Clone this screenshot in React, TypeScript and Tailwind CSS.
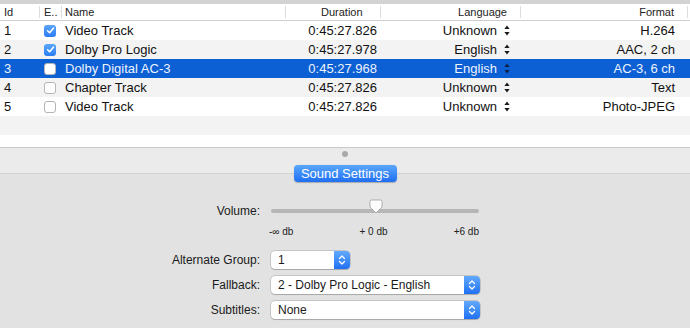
import React from 'react'

const rows = [
  { id: 1, on: true, name: 'Video Track', dur: '0:45:27.826', lang: 'Unknown', fmt: 'H.264' },
  { id: 2, on: true, name: 'Dolby Pro Logic', dur: '0:45:27.978', lang: 'English', fmt: 'AAC, 2 ch' },
  { id: 3, on: false, name: 'Dolby Digital AC-3', dur: '0:45:27.968', lang: 'English', fmt: 'AC-3, 6 ch' },
  { id: 4, on: false, name: 'Chapter Track', dur: '0:45:27.826', lang: 'Unknown', fmt: 'Text' },
  { id: 5, on: false, name: 'Video Track', dur: '0:45:27.826', lang: 'Unknown', fmt: 'Photo-JPEG' },
]

function Checkbox({ on }: { on: boolean }) {
  if (on) {
    return (
      <div className="w-[12px] h-[12px] rounded-[3px] bg-gradient-to-b from-[#5aa5fb] to-[#2a7cf5] flex items-center justify-center">
        <svg width="9" height="9" viewBox="0 0 9 9">
          <path d="M1.6 4.8 L3.6 6.8 L7.4 2.2" fill="none" stroke="#fff" strokeWidth="1.6" strokeLinecap="round" strokeLinejoin="round" />
        </svg>
      </div>
    )
  }
  return <div className="w-[12px] h-[12px] rounded-[3px] bg-white border border-[#b4b4b4]" />
}

function Stepper({ light }: { light?: boolean }) {
  const c = light ? '#0b1f44' : '#1a1a1a'
  return (
    <svg width="6" height="11" viewBox="0 0 6 11">
      <path d="M3 0.5 L5.6 4 L0.4 4 Z" fill={c} />
      <path d="M3 10.5 L5.6 7 L0.4 7 Z" fill={c} />
    </svg>
  )
}

function Popup({ value, width }: { value: string; width: string }) {
  return (
    <div className={`${width} h-[18px] flex bg-white rounded-[4px] shadow-[0_0_0_0.5px_rgba(0,0,0,0.25),0_1px_1px_rgba(0,0,0,0.15)]`}>
      <div className="flex-1 pl-[7px] flex items-center text-[12px] text-[#1a1a1a]">{value}</div>
      <div className="w-[16px] h-full rounded-r-[4px] bg-gradient-to-b from-[#62a9fb] to-[#1f6ff3] flex items-center justify-center">
        <svg width="8" height="12" viewBox="0 0 8 12">
          <path d="M1.5 4.5 L4 2 L6.5 4.5 M1.5 7.5 L4 10 L6.5 7.5" fill="none" stroke="#fff" strokeWidth="1.3" strokeLinecap="round" strokeLinejoin="round" />
        </svg>
      </div>
    </div>
  )
}

const sep = 'border-r border-[#dcdcdc]'

export default function App() {
  return (
    <div className="w-[690px] h-[328px] overflow-hidden bg-[#e2e2e2] flex flex-col" style={{ fontFamily: '"Liberation Sans", Arial, sans-serif' }}>
      <div className="h-[4px] bg-[#d3d3d3]" />
      {/* header */}
      <div className="h-[17px] bg-white border-b border-[#cfcfcf] flex text-[11px] text-[#222]">
        <div className={`w-[40px] pl-[4px] flex items-center my-[2px] ${sep}`}>Id</div>
        <div className={`w-[22px] pl-[4px] flex items-center my-[2px] ${sep}`}>E..</div>
        <div className={`w-[224px] pl-[3px] flex items-center my-[2px] ${sep}`}>Name</div>
        <div className={`w-[95px] pl-[35px] flex items-center my-[2px] ${sep}`}>Duration</div>
        <div className={`w-[140px] pr-[13px] flex items-center justify-end my-[2px] ${sep}`}>Language</div>
        <div className={`w-[167px] pr-[13px] flex items-center justify-end my-[2px] ${sep}`}>Format</div>
      </div>
      {/* rows */}
      <div className="flex flex-col text-[13px]">
        {rows.map((r, i) => {
          const sel = r.id === 3
          const bg = sel ? 'bg-[#0c60d4] text-[#eef3fd]' : i % 2 === 1 ? 'bg-[#f3f3f3] text-[#111]' : 'bg-white text-[#111]'
          return (
            <div key={r.id} className={`h-[19px] flex items-center ${bg}`}>
              <div className="w-[40px] pl-[4px]">{r.id}</div>
              <div className="w-[22px] pl-[4px]">
                <Checkbox on={r.on} />
              </div>
              <div className="w-[224px] pl-[3px]">{r.name}</div>
              <div className="w-[95px] pr-[4px] text-right">{r.dur}</div>
              <div className="w-[140px] pr-[11px] flex items-center justify-end gap-[7px]">
                <span>{r.lang}</span>
                <Stepper light={sel} />
              </div>
              <div className="w-[167px] pr-[13px] text-right">{r.fmt}</div>
            </div>
          )
        })}
        <div className="h-[19px] bg-[#f3f3f3]" />
        <div className="h-[12px] bg-white" />
      </div>
      {/* lower pane */}
      <div className="h-[27px] bg-[#ebebeb] border-t border-[#c9c9c9] border-b border-b-[#d2d2d2] flex justify-center pt-[3px]">
        <div className="w-[6px] h-[6px] rounded-full bg-[#a9a9a9]" />
      </div>
      <div className="flex flex-col text-[12px] text-[#1a1a1a]">
        <button className="-mt-[9px] mx-auto w-[103px] h-[17px] rounded-[4px] bg-gradient-to-b from-[#5ba6fb] to-[#1e6ef3] text-white text-[13px] leading-none flex items-center justify-center shadow-[0_0.5px_1px_rgba(0,0,0,0.25)]">
          Sound Settings
        </button>
        <div className="mt-[22px] h-[14px] flex items-center">
          <div className="w-[260px] text-right">Volume:</div>
          <div className="ml-[11px] w-[208px] relative h-[14px] flex items-center">
            <div className="w-full h-[4px] rounded-full bg-[#b6b6b6]" />
            <svg className="absolute left-[98px] top-[-5px]" width="14" height="15" viewBox="0 0 14 15">
              <path d="M2.5 1 H11.5 Q13 1 13 2.5 V8 L7 14 L1 8 V2.5 Q1 1 2.5 1 Z" fill="#fdfdfd" stroke="#9c9c9c" strokeWidth="0.8" />
            </svg>
          </div>
        </div>
        <div className="mt-[7px] h-[12px] flex items-center">
          <div className="ml-[269px] w-[210px] flex justify-between text-[10px] text-[#222]">
            <span>-∞ db</span>
            <span>+ 0 db</span>
            <span>+6 db</span>
          </div>
        </div>
        <div className="mt-[14px] flex items-center">
          <div className="w-[260px] text-right">Alternate Group:</div>
          <div className="ml-[11px]">
            <Popup value="1" width="w-[79px]" />
          </div>
        </div>
        <div className="mt-[7px] flex items-center">
          <div className="w-[260px] text-right">Fallback:</div>
          <div className="ml-[11px]">
            <Popup value="2 - Dolby Pro Logic - English" width="w-[209px]" />
          </div>
        </div>
        <div className="mt-[7px] flex items-center">
          <div className="w-[260px] text-right">Subtitles:</div>
          <div className="ml-[11px]">
            <Popup value="None" width="w-[209px]" />
          </div>
        </div>
      </div>
    </div>
  )
}
